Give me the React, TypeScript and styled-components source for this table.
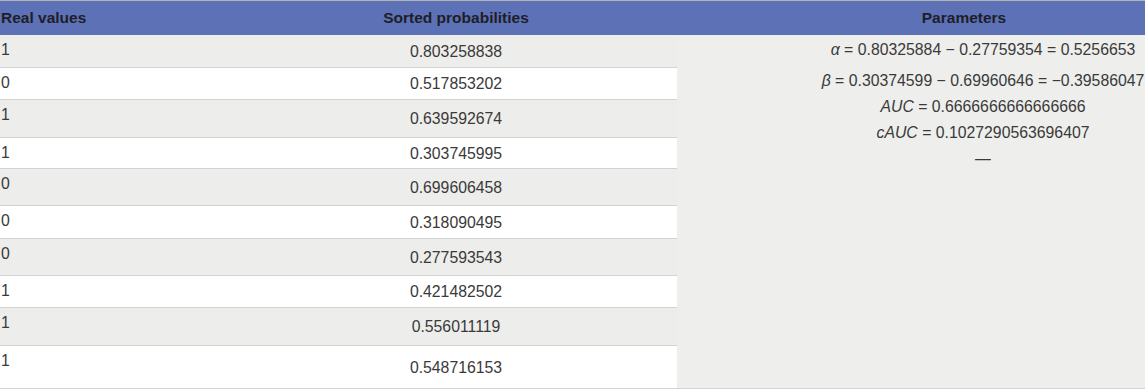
import React from "react";
import styled, { createGlobalStyle } from "styled-components";

const Global = createGlobalStyle`
  html, body { margin: 0; padding: 0; background: #ffffff; }
  body { font-family: "Liberation Sans", Arial, sans-serif; }
`;

const Frame = styled.div`
  width: 100%;
  overflow: hidden;
  border-top: 1px solid #b4b4b4;
`;

const Table = styled.table`
  width: 1251px;
  table-layout: fixed;
  border-collapse: collapse;
  font-family: "Liberation Sans", Arial, sans-serif;
  font-size: 15.8px;
  color: #3a3a3a;
`;

const HeadCell = styled.th<{ $align?: "left" | "center" }>`
  height: 34px;
  padding: 0 ${(p) => (p.$align === "left" ? "0 0 1px" : "0")};
  background: #5c71b6;
  color: #1e1e28;
  font-weight: bold;
  font-size: 15.5px;
  text-align: ${(p) => p.$align ?? "center"};
  vertical-align: middle;
`;

const Row = styled.tr<{ $h: number; $shade: boolean }>`
  height: ${(p) => p.$h}px;
  background: ${(p) => (p.$shade ? "#ededeb" : "#ffffff")};
`;

const ValueCell = styled.td`
  padding: 6px 0 0 1px;
  vertical-align: top;
  line-height: 18px;
  border-bottom: 1px solid #d2d2d2;
`;

const ProbCell = styled.td`
  padding: 2px 0 0;
  text-align: center;
  vertical-align: middle;
  line-height: 18px;
  border-bottom: 1px solid #d2d2d2;
`;

const ParamCell = styled.td`
  padding: 2px 0 0 38px;
  background: #eeeeec;
  vertical-align: top;
  text-align: center;
  border-bottom: 1px solid #d2d2d2;
`;

const MathLine = styled.div<{ $gap?: number }>`
  line-height: 26px;
  margin-bottom: ${(p) => p.$gap ?? 0}px;
  white-space: nowrap;
`;

const V = styled.i`
  font-style: italic;
`;

const rows = [
  { real: "1", prob: "0.803258838", h: 32 },
  { real: "0", prob: "0.517853202", h: 32 },
  { real: "1", prob: "0.639592674", h: 38 },
  { real: "1", prob: "0.303745995", h: 31 },
  { real: "0", prob: "0.699606458", h: 37 },
  { real: "0", prob: "0.318090495", h: 33 },
  { real: "0", prob: "0.277593543", h: 37 },
  { real: "1", prob: "0.421482502", h: 32 },
  { real: "1", prob: "0.556011119", h: 38 },
  { real: "1", prob: "0.548716153", h: 43 },
];

export default function App() {
  return (
    <>
      <Global />
      <Frame>
        <Table>
          <colgroup>
            <col style={{ width: 235 }} />
            <col style={{ width: 442 }} />
            <col style={{ width: 574 }} />
          </colgroup>
          <thead>
            <tr>
              <HeadCell $align="left">Real values</HeadCell>
              <HeadCell>Sorted probabilities</HeadCell>
              <HeadCell>Parameters</HeadCell>
            </tr>
          </thead>
          <tbody>
            {rows.map((r, i) => (
              <Row key={i} $h={r.h} $shade={i % 2 === 0}>
                <ValueCell>{r.real}</ValueCell>
                <ProbCell>{r.prob}</ProbCell>
                {i === 0 && (
                  <ParamCell rowSpan={rows.length}>
                    <MathLine $gap={5}>
                      <V>α</V> = 0.80325884 − 0.27759354 = 0.5256653
                    </MathLine>
                    <MathLine>
                      <V>β</V> = 0.30374599 − 0.69960646 = −0.39586047
                    </MathLine>
                    <MathLine>
                      <V>AUC</V> = 0.6666666666666666
                    </MathLine>
                    <MathLine>
                      <V>cAUC</V> = 0.1027290563696407
                    </MathLine>
                    <MathLine>—</MathLine>
                  </ParamCell>
                )}
              </Row>
            ))}
          </tbody>
        </Table>
      </Frame>
    </>
  );
}
